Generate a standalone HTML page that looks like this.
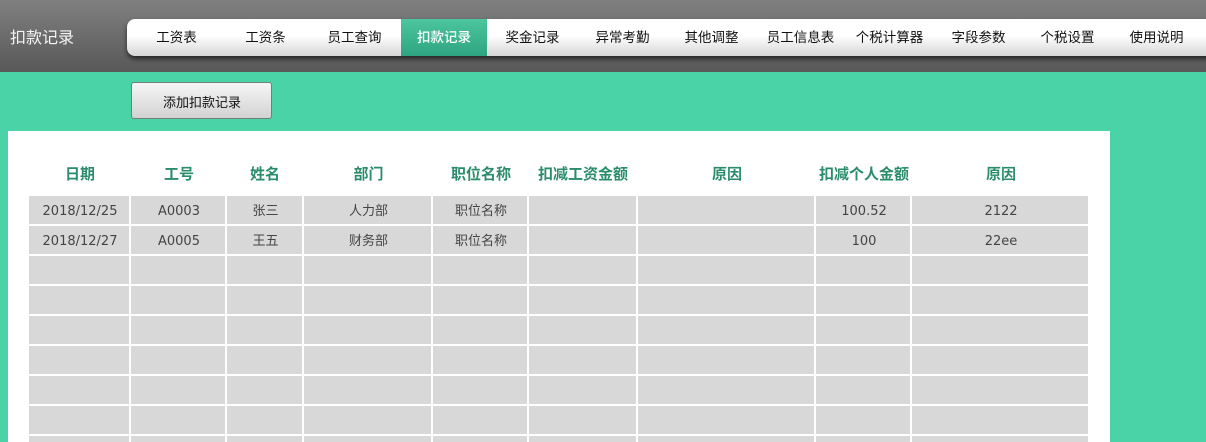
<!DOCTYPE html>
<html lang="zh">
<head>
<meta charset="utf-8">
<title>扣款记录</title>
<style>
html,body{margin:0;padding:0}
body{width:1206px;height:442px;overflow:hidden;background:#4bd3a8;position:relative;font-family:"DejaVu Sans","Noto Sans CJK SC",sans-serif}
.abs{position:absolute}
#hd{left:0;top:0;width:1206px;height:72px;background:linear-gradient(#808080,#585858)}
#title{left:10px;top:24px;font:16px/24px "Noto Sans CJK SC",sans-serif;color:#f4f4f4;width:70px;white-space:nowrap}
#nav{left:127px;top:19px;width:1100px;height:37px;border-radius:8px;background:linear-gradient(#fff 0,#fff 45%,#d6d6d6 100%);box-shadow:0 3px 5px rgba(0,0,0,.6)}
.n{position:absolute;top:19px;height:37px;width:89px;text-align:center;font:13.5px/34px "Noto Sans CJK SC",sans-serif;color:#111;white-space:nowrap}
.n.on{left:400px;width:88px;background:linear-gradient(#4cc69e,#2ea580);background-size:86px 100%;background-position:1px 0;background-repeat:no-repeat;color:#fff;font-weight:500}
#btn{left:131px;top:82px;width:139px;height:35px;border:1px solid #6f7f7a;border-radius:3px;background:linear-gradient(#f6f6f6,#e6e6e6 45%,#d2d2d2 100%);text-align:center;font:13px/37px "Noto Sans CJK SC",sans-serif;color:#111;text-indent:1px}
#panel{left:8px;top:131px;width:1102px;height:311px;background:#fff}
.th{position:absolute;top:162px;height:24px;text-align:center;font:bold 15px/24px "Noto Sans CJK SC",sans-serif;color:#2a8c6c;white-space:nowrap}
.c{position:absolute;height:28px;background:#d8d8d8;text-align:center;font:13px/31px "DejaVu Sans","Noto Sans CJK SC",sans-serif;color:#444;white-space:nowrap;text-indent:2px;overflow:hidden}
.cj{font:13px/28px "Noto Sans CJK SC",sans-serif}
</style>
</head>
<body>
<div id="hd" class="abs"></div>
<div id="title" class="abs">扣款记录</div>
<div id="nav" class="abs"></div>
<div class="n" style="left:132px">工资表</div>
<div class="n" style="left:221px">工资条</div>
<div class="n" style="left:310px">员工查询</div>
<div class="n on">扣款记录</div>
<div class="n" style="left:488px">奖金记录</div>
<div class="n" style="left:578px">异常考勤</div>
<div class="n" style="left:667px">其他调整</div>
<div class="n" style="left:756px">员工信息表</div>
<div class="n" style="left:845px">个税计算器</div>
<div class="n" style="left:934px">字段参数</div>
<div class="n" style="left:1023px">个税设置</div>
<div class="n" style="left:1112px">使用说明</div>
<div id="btn" class="abs">添加扣款记录</div>
<div id="panel" class="abs"></div>

<div class="th" style="left:29px;width:102px">日期</div>
<div class="th" style="left:131px;width:96px">工号</div>
<div class="th" style="left:227px;width:76px">姓名</div>
<div class="th" style="left:304px;width:129px">部门</div>
<div class="th" style="left:433px;width:96px">职位名称</div>
<div class="th" style="left:529px;width:108px">扣减工资金额</div>
<div class="th" style="left:638px;width:178px">原因</div>
<div class="th" style="left:816px;width:96px">扣减个人金额</div>
<div class="th" style="left:912px;width:178px">原因</div>

<!-- row 1 -->
<div class="c" style="top:196px;left:29px;width:100px">2018/12/25</div>
<div class="c" style="top:196px;left:131px;width:94px">A0003</div>
<div class="c cj" style="top:196px;left:227px;width:75px">张三</div>
<div class="c cj" style="top:196px;left:304px;width:127px">人力部</div>
<div class="c cj" style="top:196px;left:433px;width:94px">职位名称</div>
<div class="c" style="top:196px;left:529px;width:107px"></div>
<div class="c" style="top:196px;left:638px;width:176px"></div>
<div class="c" style="top:196px;left:816px;width:94px">100.52</div>
<div class="c" style="top:196px;left:912px;width:176px">2122</div>
<!-- row 2 -->
<div class="c" style="top:226px;left:29px;width:100px">2018/12/27</div>
<div class="c" style="top:226px;left:131px;width:94px">A0005</div>
<div class="c cj" style="top:226px;left:227px;width:75px">王五</div>
<div class="c cj" style="top:226px;left:304px;width:127px">财务部</div>
<div class="c cj" style="top:226px;left:433px;width:94px">职位名称</div>
<div class="c" style="top:226px;left:529px;width:107px"></div>
<div class="c" style="top:226px;left:638px;width:176px"></div>
<div class="c" style="top:226px;left:816px;width:94px">100</div>
<div class="c" style="top:226px;left:912px;width:176px">22ee</div>
<!-- empty rows -->
<div class="abs" style="left:29px;top:256px;width:1059px;height:186px;background:
linear-gradient(90deg,
#d8d8d8 0,#d8d8d8 100px,#fff 100px,#fff 102px,
#d8d8d8 102px,#d8d8d8 196px,#fff 196px,#fff 198px,
#d8d8d8 198px,#d8d8d8 273px,#fff 273px,#fff 275px,
#d8d8d8 275px,#d8d8d8 402px,#fff 402px,#fff 404px,
#d8d8d8 404px,#d8d8d8 498px,#fff 498px,#fff 500px,
#d8d8d8 500px,#d8d8d8 607px,#fff 607px,#fff 609px,
#d8d8d8 609px,#d8d8d8 785px,#fff 785px,#fff 787px,
#d8d8d8 787px,#d8d8d8 881px,#fff 881px,#fff 883px,
#d8d8d8 883px,#d8d8d8 1059px)"></div>
<div class="abs" style="left:29px;top:256px;width:1059px;height:186px;background:repeating-linear-gradient(180deg,transparent 0,transparent 28px,#fff 28px,#fff 30px)"></div>
</body>
</html>
